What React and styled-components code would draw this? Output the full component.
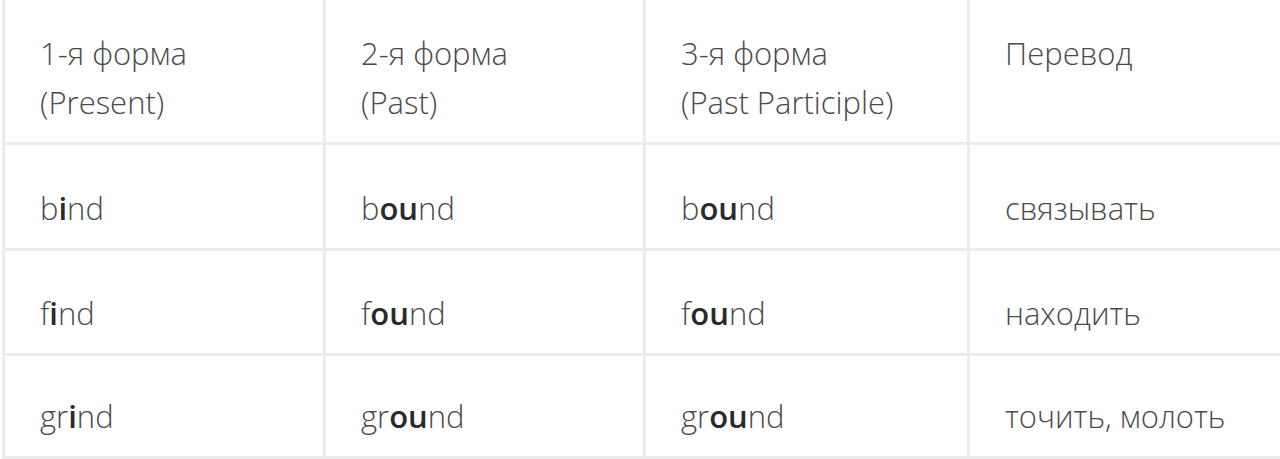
import React from "react";
import styled, { createGlobalStyle } from "styled-components";

const Global = createGlobalStyle`
  html, body { margin: 0; padding: 0; background: #ffffff; overflow: hidden; }
  body { font-family: "Open Sans", "Noto Sans", sans-serif; }
`;

const Page = styled.div`
  padding-left: 2px;
  width: 1278px;
`;

const Table = styled.div`
  display: grid;
  grid-template-columns: 318px 317px 321px 1fr;
  grid-template-rows: 142px 103px 102px 100px;
  gap: 3px;
  background: #ececec;
  padding: 0 0 3px 3px;
`;

const Cell = styled.div`
  background: #ffffff;
  display: flex;
  flex-direction: column;
  justify-content: flex-end;
  padding: 0 10px 15px 35px;
  font-size: 31px;
  line-height: 49px;
  color: #4a4a4a;
  font-weight: 350;
  white-space: nowrap;
`;

const Line = styled.span`
  display: block;
`;

const Mark = styled.b`
  font-weight: 600;
  color: #2a2a2a;
`;

const header = [
  ["1-я форма", "(Present)"],
  ["2-я форма", "(Past)"],
  ["3-я форма", "(Past Participle)"],
  ["Перевод", ""],
];

const rows = [
  [["b", "i", "nd"], ["b", "ou", "nd"], ["b", "ou", "nd"], "связывать"],
  [["f", "i", "nd"], ["f", "ou", "nd"], ["f", "ou", "nd"], "находить"],
  [["gr", "i", "nd"], ["gr", "ou", "nd"], ["gr", "ou", "nd"], "точить, молоть"],
];

const Word = ({ parts }) => (
  <Line>
    {parts[0]}
    <Mark>{parts[1]}</Mark>
    {parts[2]}
  </Line>
);

export default function App() {
  return (
    <>
      <Global />
      <Page>
        <Table>
          {header.map((h, i) => (
            <Cell key={"h" + i}>
              <Line>{h[0]}</Line>
              <Line>{h[1] || "\u00a0"}</Line>
            </Cell>
          ))}
          {rows.map((r, ri) =>
            r.map((c, ci) => (
              <Cell key={ri + "-" + ci}>
                {Array.isArray(c) ? <Word parts={c} /> : <Line>{c}</Line>}
              </Cell>
            ))
          )}
        </Table>
      </Page>
    </>
  );
}
